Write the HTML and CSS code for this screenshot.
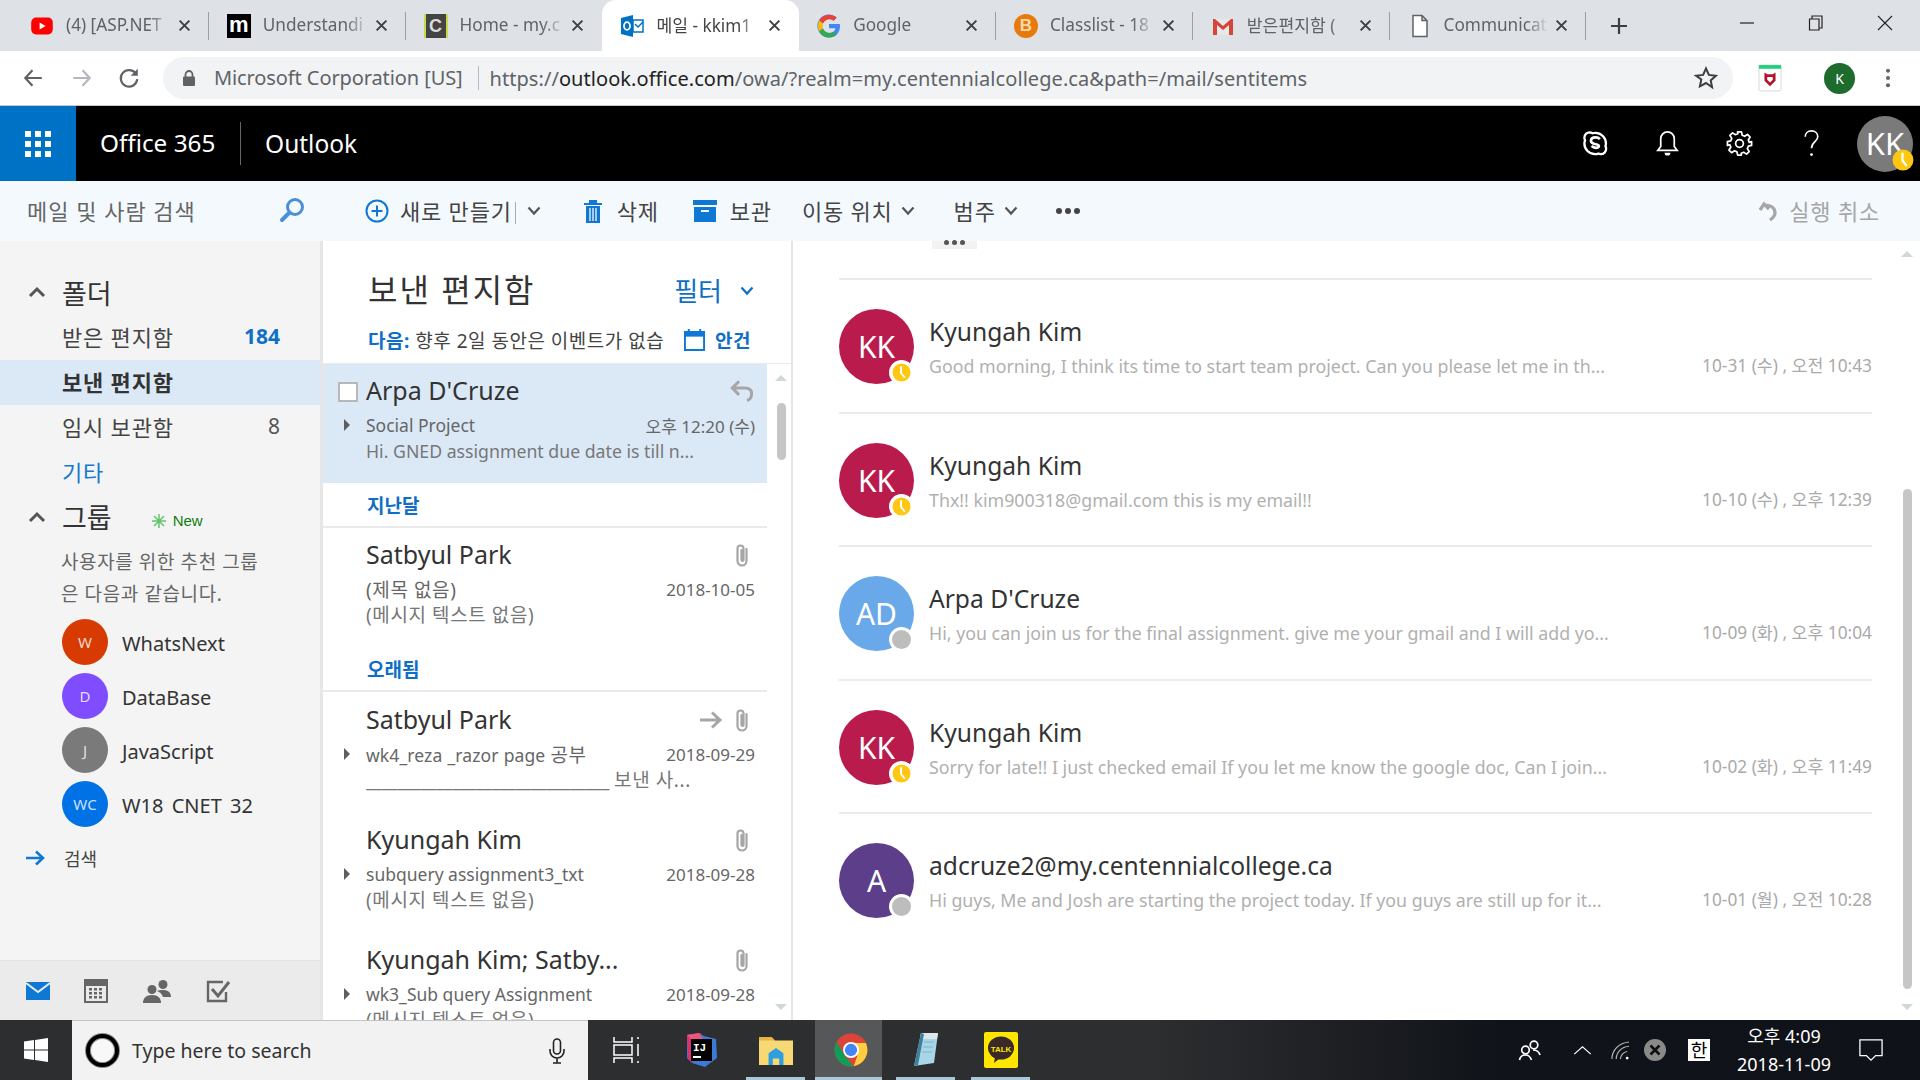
FILE: index.html
```html
<!DOCTYPE html>
<html lang="ko">
<head>
<meta charset="utf-8">
<title>메일 - Outlook</title>
<link rel="stylesheet" href="styles.css">
</head>
<body>
<svg class="sprite" width="0" height="0">
  <symbol id="x" viewBox="0 0 12 12"><path d="M1.5 1.5l9 9M10.5 1.5l-9 9" stroke="#3c4043" stroke-width="1.8" fill="none"/></symbol>
  <symbol id="chev" viewBox="0 0 14 10"><path d="M1.5 1.5L7 7.500l5.500-6" stroke="currentColor" stroke-width="2.200" fill="none"/></symbol>
  <symbol id="caret" viewBox="0 0 8 12"><path d="M1 0l6 6-6 6z" fill="#5f5f5f"/></symbol>
  <symbol id="clip" viewBox="0 0 14 24"><path d="M11.5 6v12a4.500 4.500 0 0 1-9 0V5.500a3 3 0 0 1 6 0V17a1 1 0 0 1-2 0V7" stroke="#a6a6a6" stroke-width="2.200" fill="none" stroke-linecap="round"/></symbol>
  <symbol id="clock" viewBox="0 0 20 20"><circle cx="10" cy="10" r="9.500" fill="#fdc712"/><path d="M9.500 3.500v7l4 5" stroke="#fff" stroke-width="2" fill="none"/></symbol>
</svg>

<header class="tabstrip">
  <div class="tab sep">
    <svg class="fav" viewBox="0 0 20 20"><rect x="1" y="3" width="18" height="14" rx="4" fill="#f00"/><path d="M8 7l5 3-5 3z" fill="#fff"/></svg>
    <span class="tab-title">(4) [ASP.NET</span><svg class="tab-x"><use href="#x"/></svg>
  </div>
  <div class="tab sep">
    <span class="fav fav-m">m</span>
    <span class="tab-title">Understandi</span><svg class="tab-x"><use href="#x"/></svg>
  </div>
  <div class="tab">
    <span class="fav fav-c">C</span>
    <span class="tab-title">Home - my.c</span><svg class="tab-x"><use href="#x"/></svg>
  </div>
  <div class="tab active">
    <svg class="fav" viewBox="0 0 24 24"><path d="M1 4l12-3v22L1 20z" fill="#0072c6"/><rect x="13" y="6" width="10" height="12" fill="none" stroke="#0072c6" stroke-width="1.500"/><path d="M15 10l3 3 5-5" stroke="#0072c6" stroke-width="1.500" fill="none"/><ellipse cx="7" cy="12" rx="3" ry="3.800" fill="none" stroke="#fff" stroke-width="1.800"/></svg>
    <span class="tab-title">메일 - kkim1</span><svg class="tab-x"><use href="#x"/></svg>
  </div>
  <div class="tab sep">
    <svg class="fav" viewBox="0 0 24 24"><path d="M12 10v4.200h6.500c-.6 3-3 4.800-6.500 4.800a7 7 0 1 1 4.600-12.300l3.100-3.100A11.500 11.500 0 1 0 12 23.500c6.300 0 11-4.400 11-11.500 0-.7-.1-1.400-.2-2z" fill="#4285f4"/><path d="M2.200 6.500L6 9.400A7 7 0 0 1 16.600 6.700l3.100-3.100A11.500 11.500 0 0 0 2.200 6.500z" fill="#ea4335"/><path d="M1 12a11 11 0 0 0 1.200 5.300L6 14.400a7 7 0 0 1 0-5L2.200 6.500A11 11 0 0 0 1 12z" fill="#fbbc05"/><path d="M2.200 17.400A11.500 11.500 0 0 0 12 23.500c3 0 5.600-1 7.500-2.800l-3.500-2.800A7 7 0 0 1 6 14.500z" fill="#34a853"/></svg>
    <span class="tab-title">Google</span><svg class="tab-x"><use href="#x"/></svg>
  </div>
  <div class="tab sep">
    <span class="fav fav-b">B</span>
    <span class="tab-title">Classlist - 18</span><svg class="tab-x"><use href="#x"/></svg>
  </div>
  <div class="tab sep">
    <svg class="fav" viewBox="0 0 24 24"><rect x="2" y="5" width="20" height="16" fill="#e8e8e8"/><path d="M2 5v16h4V11l6 5 6-5v10h4V5h-2l-8 7-8-7z" fill="#d44638"/></svg>
    <span class="tab-title">받은편지함 (</span><svg class="tab-x"><use href="#x"/></svg>
  </div>
  <div class="tab sep">
    <svg class="fav" viewBox="0 0 20 24"><path d="M3 1.500h9l5 5v16H3zM12 1.500v5h5" fill="#fff" stroke="#5f6368" stroke-width="1.500"/></svg>
    <span class="tab-title">Communicat</span><svg class="tab-x"><use href="#x"/></svg>
  </div>
  <svg class="tab-plus" viewBox="0 0 18 18"><path d="M9 1v16M1 9h16" stroke="#3c4043" stroke-width="2.200"/></svg>
  <div class="win-controls">
    <svg viewBox="0 0 16 16"><path d="M1 8h14" stroke="#222" stroke-width="1.200"/></svg>
    <svg viewBox="0 0 16 16"><path d="M4 4V1h10v12h-3M1.500 4h9.500v11H1.500z" stroke="#222" stroke-width="1.200" fill="none"/></svg>
    <svg viewBox="0 0 16 16"><path d="M1 1l14 14M15 1L1 15" stroke="#222" stroke-width="1.100"/></svg>
  </div>
</header>

<nav class="toolbar">
  <svg class="nav-ico" viewBox="0 0 20 20"><path d="M18 10H3M9.500 3L3 10l6.500 7" stroke="#5f6368" stroke-width="2" fill="none"/></svg>
  <svg class="nav-ico" viewBox="0 0 20 20"><path d="M2 10h15M10.500 3l6.500 7-6.500 7" stroke="#b4b7bb" stroke-width="2" fill="none"/></svg>
  <svg class="nav-ico" viewBox="0 0 20 20"><path d="M16.500 6.500A7.500 7.500 0 1 0 17.500 11" stroke="#5f6368" stroke-width="2" fill="none"/><path d="M18 1.500V8h-6.500z" fill="#5f6368"/></svg>
  <div class="omnibox">
    <svg class="lock" viewBox="0 0 14 18"><path d="M3.500 8V5.500a3.500 3.500 0 0 1 7 0V8" stroke="#5f6368" stroke-width="1.800" fill="none"/><rect x="1" y="7.500" width="12" height="9.500" rx="1" fill="#5f6368"/></svg>
    <span class="origin">Microsoft Corporation [US]</span>
    <span class="url">https://<b>outlook.office.com</b>/owa/?realm=my.centennialcollege.ca&amp;path=/mail/sentitems</span>
    <svg class="star" viewBox="0 0 24 24"><path d="M12 2.500l2.900 6.400 7 .8-5.200 4.700 1.400 6.900L12 17l-6.100 3.300 1.400-6.900L2.100 9.700l7-.8z" stroke="#3c4043" stroke-width="2" fill="none"/></svg>
  </div>
  <svg class="ext" viewBox="0 0 26 30"><rect x="1" y="1" width="24" height="28" rx="2" fill="#fff" stroke="#d5d5d5"/><rect x="1" y="1" width="24" height="4" fill="#1fd07f"/><path d="M7 9l3 2h6l3-2v9l-6 6-6-6z" fill="#b3142b"/><path d="M10 14h6v3l-3 3-3-3z" fill="#fff"/></svg>
  <span class="profile">K</span>
  <svg class="kebab" viewBox="0 0 6 24"><circle cx="3" cy="4" r="2.200" fill="#5f6368"/><circle cx="3" cy="12" r="2.200" fill="#5f6368"/><circle cx="3" cy="20" r="2.200" fill="#5f6368"/></svg>
</nav>

<section class="suitebar">
  <div class="waffle"><svg viewBox="0 0 26 26"><g fill="#fff"><rect width="6" height="6"/><rect x="10" width="6" height="6"/><rect x="20" width="6" height="6"/><rect y="10" width="6" height="6"/><rect x="10" y="10" width="6" height="6"/><rect x="20" y="10" width="6" height="6"/><rect y="20" width="6" height="6"/><rect x="10" y="20" width="6" height="6"/><rect x="20" y="20" width="6" height="6"/></g></svg></div>
  <span class="brand">Office 365</span>
  <span class="app">Outlook</span>
  <div class="suite-icons">
    <svg viewBox="0 0 30 30"><path d="M9 3.500a5.500 5.500 0 0 0-5.500 5.500c0 1 .3 2 .7 2.800-.5 1-.7 2-.7 3.200a11 11 0 0 0 11 11c1.200 0 2.300-.2 3.300-.6.800.4 1.700.6 2.700.6a5.500 5.500 0 0 0 5.500-5.500c0-1-.3-2-.7-2.800.3-.9.500-1.800.5-2.700a11 11 0 0 0-11-11c-1 0-2 .1-2.900.4A5.400 5.400 0 0 0 9 3.500z" fill="none" stroke="#fff" stroke-width="2.400"/><path d="M19.500 10.500c-1-1.200-2.500-1.800-4.500-1.800-2.800 0-4.700 1.400-4.700 3.500 0 4.700 8.200 2.700 8.200 5.500 0 1-1.200 1.800-3.300 1.800-1.800 0-3.100-.8-4.200-2" fill="none" stroke="#fff" stroke-width="2.800"/></svg>
    <svg viewBox="0 0 30 30"><path d="M15 3a7 7 0 0 0-7 7v8l-3 4h20l-3-4v-8a7 7 0 0 0-7-7z" fill="none" stroke="#fff" stroke-width="1.800"/><path d="M12 24.500a3 3 0 0 0 6 0z" fill="#fff"/></svg>
    <svg viewBox="0 0 30 30"><circle cx="15" cy="15" r="4" fill="none" stroke="#fff" stroke-width="1.800"/><path d="M13 3h4l.8 3.500 2.500 1 3-1.900 2.700 2.700-1.900 3 1 2.500L27.500 13v4l-3.400.8-1 2.500 1.900 3-2.700 2.700-3-1.900-2.500 1L16.900 27h-3.800l-.8-3.400-2.500-1-3 1.900-2.700-2.700 1.900-3-1-2.500L2.500 17v-4L6 12.200l1-2.500-1.900-3 2.700-2.700 3 1.900 2.500-1z" fill="none" stroke="#fff" stroke-width="1.800" stroke-linejoin="round"/></svg>
    <svg viewBox="0 0 30 30"><path d="M8.500 8c0-3.500 2.800-6 6.500-6s6.500 2.500 6.500 6c0 5-6.500 5.500-6.500 12" fill="none" stroke="#fff" stroke-width="1.700"/><circle cx="15" cy="26.500" r="1.500" fill="#fff"/></svg>
  </div>
  <div class="me">KK<svg class="me-badge"><use href="#clock"/></svg></div>
</section>

<main class="workspace">
  <aside class="leftnav">
    <div class="searchbox">
      <span>메일 및 사람 검색</span>
      <svg viewBox="0 0 26 26"><circle cx="16" cy="10" r="7.500" fill="none" stroke="#4a90d9" stroke-width="3"/><path d="M10.500 15.500L3 23" stroke="#4a90d9" stroke-width="4" stroke-linecap="round"/></svg>
    </div>
    <div class="folders">
      <div class="sect-head"><svg class="sect-chev" viewBox="0 0 18 12"><path d="M2 10l7-7 7 7" stroke="#555" stroke-width="3" fill="none"/></svg><span>폴더</span></div>
      <div class="folder"><span>받은 편지함</span><b class="count-blue">184</b></div>
      <div class="folder current"><span>보낸 편지함</span></div>
      <div class="folder"><span>임시 보관함</span><span class="count">8</span></div>
      <div class="folder more"><span>기타</span></div>
      <div class="sect-head group-head"><svg class="sect-chev" viewBox="0 0 18 12"><path d="M2 10l7-7 7 7" stroke="#555" stroke-width="3" fill="none"/></svg><span>그룹</span>
        <span class="new-tag"><svg viewBox="0 0 14 14"><path d="M7 0v14M0 7h14M2 2l10 10M12 2L2 12" stroke="#63c56b" stroke-width="1.500"/></svg>New</span>
      </div>
      <p class="group-note">사용자를 위한 추천 그룹<br>은 다음과 같습니다.</p>
      <div class="group"><span class="g-av g-w">W</span><span>WhatsNext</span></div>
      <div class="group"><span class="g-av g-d">D</span><span>DataBase</span></div>
      <div class="group"><span class="g-av g-j">J</span><span>JavaScript</span></div>
      <div class="group"><span class="g-av g-c">WC</span><span class="g-clip">W18 CNET 32</span></div>
      <div class="discover"><svg viewBox="0 0 20 16"><path d="M1 8h17M11 1.500L18 8l-7 6.500" stroke="#0f78d4" stroke-width="2.600" fill="none"/></svg><span>검색</span></div>
    </div>
    <div class="modules">
      <svg viewBox="0 0 24 18"><rect width="24" height="18" fill="#0f78d4"/><path d="M0 1l12 9L24 1" stroke="#ebebeb" stroke-width="2" fill="none"/></svg>
      <svg viewBox="0 0 24 24"><rect width="24" height="24" fill="#666"/><rect x="2" y="7" width="20" height="15" fill="#ebebeb"/><g fill="#666"><rect x="5" y="9" width="3" height="2.500"/><rect x="10" y="9" width="3" height="2.500"/><rect x="15" y="9" width="3" height="2.500"/><rect x="5" y="13" width="3" height="2.500"/><rect x="10" y="13" width="3" height="2.500"/><rect x="15" y="13" width="3" height="2.500"/><rect x="5" y="17" width="3" height="2.500"/><rect x="10" y="17" width="3" height="2.500"/><rect x="15" y="17" width="3" height="2.500"/></g></svg>
      <svg viewBox="0 0 30 24"><g fill="#666"><circle cx="10" cy="10.500" r="4.500"/><path d="M1 24c0-5 3-8 9-8s9 3 9 8z"/><circle cx="21" cy="5.500" r="4.500"/><path d="M15 12c1.500-1 3.500-1 6-1 5 0 8 2.500 8 7h-8c-1-3-3-5-6-6z"/></g></svg>
      <svg viewBox="0 0 24 24"><path d="M20 13v9H2V3h15" stroke="#666" stroke-width="2.400" fill="none"/><path d="M6 10l6 7L23 3" stroke="#666" stroke-width="3" fill="none"/></svg>
    </div>
  </aside>

  <div class="content">
    <div class="commands">
      <div class="cmd cmd-new"><svg viewBox="0 0 24 24"><circle cx="12" cy="12" r="10.500" fill="none" stroke="#0f78d4" stroke-width="2"/><path d="M12 6.500v11M6.500 12h11" stroke="#0f78d4" stroke-width="2"/></svg><span>새로 만들기</span><i class="pipe"></i><svg class="c-chev"><use href="#chev"/></svg></div>
      <div class="cmd cmd-del"><svg viewBox="0 0 18 24"><path d="M0 4h18v2H0zM5 1h8v3H5zM2 7h14v17H2z" fill="#0f78d4"/><path d="M6 9v13M9 9v13M12 9v13" stroke="#f4f9fd" stroke-width="1.300"/></svg><span>삭제</span></div>
      <div class="cmd cmd-arc"><svg viewBox="0 0 24 22"><path d="M0 0h24v5H0zM1 7h22v15H1z" fill="#0f78d4"/><path d="M8 11h8" stroke="#f4f9fd" stroke-width="2"/></svg><span>보관</span></div>
      <div class="cmd cmd-move"><span>이동 위치</span><svg class="c-chev"><use href="#chev"/></svg></div>
      <div class="cmd cmd-cat"><span>범주</span><svg class="c-chev"><use href="#chev"/></svg></div>
      <div class="cmd-dots"><i></i><i></i><i></i></div>
      <div class="cmd cmd-undo"><svg viewBox="0 0 22 22"><path d="M3 10l4-6 5 5M7 5c7 0 11 3 11 8 0 3-2 5-5 7" stroke="#a6a6a6" stroke-width="3.200" fill="none"/></svg><span>실행 취소</span></div>
    </div>
    <div class="panes">
      <section class="listpane">
        <div class="list-title"><h1>보낸 편지함</h1><span class="filter">필터<svg><use href="#chev"/></svg></span></div>
        <div class="list-next">
          <span><b>다음:</b> 향후 2일 동안은 이벤트가 없습</span>
          <span class="agenda"><svg viewBox="0 0 22 24"><path d="M1 4h20v19H1z" fill="none" stroke="#0f78d4" stroke-width="2"/><path d="M1 4h20v5H1z" fill="#0f78d4"/><path d="M5 1v5M17 1v5" stroke="#0f78d4" stroke-width="2"/></svg><b>안건</b></span>
        </div>
        <div class="list-body">
          <div class="list-scroll">
            <article class="mail selected">
              <span class="checkbox"></span>
              <div class="m-top"><span class="m-name">Arpa D'Cruze</span><svg class="m-reply" viewBox="0 0 22 22"><path d="M8 2L2 8l6 6M2 8h11c4 0 6 2 6 5 0 2-1 5-4 6" stroke="#a6a6a6" stroke-width="2.600" fill="none"/></svg></div>
              <div class="m-sub"><svg class="m-caret"><use href="#caret"/></svg><span>Social Project</span><time>오후 12:20 (수)</time></div>
              <div class="m-body">Hi. GNED assignment due date is till n...</div>
            </article>
            <h2 class="m-group">지난달</h2>
            <article class="mail mail-short">
              <div class="m-top"><span class="m-name">Satbyul Park</span><svg class="m-clip"><use href="#clip"/></svg></div>
              <div class="m-sub"><span class="ko">(제목 없음)</span><time>2018-10-05</time></div>
              <div class="m-body ko">(메시지 텍스트 없음)</div>
            </article>
            <h2 class="m-group">오래됨</h2>
            <article class="mail">
              <div class="m-top"><span class="m-name">Satbyul Park</span><svg class="m-fwd" viewBox="0 0 24 20"><path d="M1 10h20M13 2.500l8 7.500-8 7.500" stroke="#a6a6a6" stroke-width="3" fill="none"/></svg><svg class="m-clip"><use href="#clip"/></svg></div>
              <div class="m-sub"><svg class="m-caret"><use href="#caret"/></svg><span class="wide">wk4_reza _razor page <span class="ko">공부</span></span><time>2018-09-29</time></div>
              <div class="m-body">_______________________________ <span class="ko">보낸 사...</span></div>
            </article>
            <article class="mail">
              <div class="m-top"><span class="m-name">Kyungah Kim</span><svg class="m-clip"><use href="#clip"/></svg></div>
              <div class="m-sub"><svg class="m-caret"><use href="#caret"/></svg><span>subquery assignment3_txt</span><time>2018-09-28</time></div>
              <div class="m-body ko">(메시지 텍스트 없음)</div>
            </article>
            <article class="mail">
              <div class="m-top"><span class="m-name">Kyungah Kim; Satby...</span><svg class="m-clip"><use href="#clip"/></svg></div>
              <div class="m-sub"><svg class="m-caret"><use href="#caret"/></svg><span>wk3_Sub query Assignment</span><time>2018-09-28</time></div>
              <div class="m-body ko">(메시지 텍스트 없음)</div>
            </article>
          </div>
          <div class="scrollbar sb-list"><i class="sb-up"></i><i class="sb-thumb"></i><i class="sb-down"></i></div>
        </div>
      </section>

      <section class="reading">
        <span class="expander"><i></i><i></i><i></i></span>
        <div class="thread">
          <article class="conv"><div class="av av-kk">KK<svg class="av-badge"><use href="#clock"/></svg></div><div class="conv-main"><div class="conv-name">Kyungah Kim</div><div class="conv-line"><span>Good morning, I think its time to start team project. Can you please let me in th...</span><time>10-31 (수) , 오전 10:43</time></div></div></article>
          <article class="conv"><div class="av av-kk">KK<svg class="av-badge"><use href="#clock"/></svg></div><div class="conv-main"><div class="conv-name">Kyungah Kim</div><div class="conv-line"><span>Thx!! kim900318@gmail.com this is my email!!</span><time>10-10 (수) , 오후 12:39</time></div></div></article>
          <article class="conv"><div class="av av-ad">AD<i class="av-off"></i></div><div class="conv-main"><div class="conv-name">Arpa D'Cruze</div><div class="conv-line"><span>Hi, you can join us for the final assignment. give me your gmail and I will add yo...</span><time>10-09 (화) , 오후 10:04</time></div></div></article>
          <article class="conv"><div class="av av-kk">KK<svg class="av-badge"><use href="#clock"/></svg></div><div class="conv-main"><div class="conv-name">Kyungah Kim</div><div class="conv-line"><span>Sorry for late!! I just checked email If you let me know the google doc, Can I join...</span><time>10-02 (화) , 오후 11:49</time></div></div></article>
          <article class="conv"><div class="av av-a">A<i class="av-off"></i></div><div class="conv-main"><div class="conv-name">adcruze2@my.centennialcollege.ca</div><div class="conv-line"><span>Hi guys, Me and Josh are starting the project today. If you guys are still up for it...</span><time>10-01 (월) , 오전 10:28</time></div></div></article>
        </div>
        <div class="scrollbar sb-read"><i class="sb-up"></i><i class="sb-thumb"></i><i class="sb-down"></i></div>
      </section>
    </div>
  </div>
</main>

<footer class="taskbar">
  <div class="start"><svg viewBox="0 0 24 24"><path d="M0 3.500l10-1.400V11.500H0zM11 2l13-2v11.500H11zM0 12.500h10v9.500L0 20.500zM11 12.500h13V24l-13-2z" fill="#fff"/></svg></div>
  <div class="tb-search">
    <span class="cortana"></span>
    <span class="tb-text">Type here to search</span>
    <svg viewBox="0 0 16 26"><rect x="4.500" y="1" width="7" height="15" rx="3.500" fill="none" stroke="#222" stroke-width="1.600"/><path d="M1 11v2a7 7 0 0 0 14 0v-2M8 20v5M4 25h8" stroke="#222" stroke-width="1.600" fill="none"/></svg>
  </div>
  <div class="tb-apps">
    <div class="tb-app tb-view"><svg viewBox="0 0 28 28"><path d="M2 1v5h18V1M2 27v-5h18v5M2 9h18v10H2zM26 1v2M26 8v12M26 25v2" stroke="#fff" stroke-width="1.500" fill="none"/></svg></div>
    <div class="tb-app"><svg viewBox="0 0 34 36"><path d="M3 3l12-2 5 3 12 3 1 19-12 9-13-4-5-5z" fill="#3a7bd5"/><path d="M3 3l14-2-8 30-5-4z" fill="#d6336c"/><path d="M3 3l12-2 4 6-8 4z" fill="#f0537b"/><rect x="7" y="7" width="21" height="22" fill="#000"/><text x="9" y="19" class="ij">IJ</text><rect x="9" y="24" width="8" height="2" fill="#fff"/></svg></div>
    <div class="tb-app run"><svg viewBox="0 0 32 28"><path d="M0 2h12l3 3h17v23H0z" fill="#f8d775"/><path d="M0 2h12l3 3H0z" fill="#e8b33f"/><path d="M9 28V17l7-5 7 5v11h-4v-6h-6v6z" fill="#2d9fe0"/></svg></div>
    <div class="tb-app tb-chrome run"><svg viewBox="0 0 32 32"><circle cx="16" cy="16" r="15.500" fill="#db4437"/><path d="M16 31.500A15.500 15.500 0 0 1 2.600 8.300l8 13.800 7.800 9.200z" fill="#0f9d58"/><path d="M18.500 31.300A15.500 15.500 0 0 0 30 9.500H16l6 12z" fill="#ffcd40"/><circle cx="16" cy="16" r="7.500" fill="#fff"/><circle cx="16" cy="16" r="5.800" fill="#4285f4"/></svg></div>
    <div class="tb-app run"><svg viewBox="0 0 28 36"><path d="M9 1h17l-4 30-20 3z" fill="#a8d6e8"/><path d="M9 1h17l-1 6H8z" fill="#dfe6ea"/><path d="M2 34l7-33 3 1-6 31z" fill="#3f7f9a"/><path d="M12 10l10 0M11 15h10M10 20h10" stroke="#7fb4c8"/></svg></div>
    <div class="tb-app run"><svg viewBox="0 0 34 36"><rect width="34" height="36" rx="2" fill="#ffe600"/><ellipse cx="17" cy="16" rx="13" ry="11.500" fill="#3a2929"/><path d="M11 25l-1 6 6-5z" fill="#3a2929"/><text x="17" y="19.500" class="talk">TALK</text></svg></div>
  </div>
  <div class="tray">
    <svg class="tr-people" viewBox="0 0 24 24"><g fill="none" stroke="#fff" stroke-width="1.700"><circle cx="16" cy="7" r="3.800"/><circle cx="7.500" cy="12" r="3.800"/><path d="M1.500 22c.5-3 2.500-5 6-5s5 2 6 5M15 12c3 0 6 1.500 7 5"/></g></svg>
    <svg class="tr-up" viewBox="0 0 20 12"><path d="M1 10l9-8 9 8" stroke="#fff" stroke-width="1.300" fill="none"/></svg>
    <svg class="tr-wifi" viewBox="0 0 20 20"><path d="M1 19C1 10 8 2 19 1M5.500 19C5.500 12 11 6 19 5.500M10 19c0-4 3-7.500 7-8" stroke="#bbb" stroke-width="1.200" fill="none"/><circle cx="17" cy="18" r="1.500" fill="#fff"/></svg>
    <svg class="tr-off" viewBox="0 0 22 22"><circle cx="11" cy="11" r="11" fill="#8a8a8a"/><path d="M6.500 6.500l9 9M15.500 6.500l-9 9" stroke="#111" stroke-width="2.600"/></svg>
    <span class="ime">한</span>
    <div class="clock"><span>오후 4:09</span><span>2018-11-09</span></div>
    <svg class="tr-note" viewBox="0 0 26 26"><path d="M1 2h24v17h-7l-5 5-5-5H1z" stroke="#fff" stroke-width="1.400" fill="none"/></svg>
  </div>
</footer>
</body>
</html>
```

FILE: styles.css
```css
* { box-sizing: border-box; }
html, body { margin: 0; padding: 0; height: 1080px; width: 1920px; overflow: hidden; }
body { font-family: "Noto Sans", "Noto Sans CJK KR", sans-serif; color: #333; background: #fff; display: flex; flex-direction: column; }
.sprite { position: absolute; }
svg { display: block; flex: none; }

/* tab strip */
.tabstrip { height: 51px; background: #dee1e6; display: flex; align-items: center; padding-left: 12px; flex: none; }
.tab { width: 196.800px; height: 51px; display: flex; align-items: center; padding: 0 18px; font-size: 17.200px; color: #5f6368; }
.tab.sep { background: linear-gradient(#9aa0a6,#9aa0a6) right center / 1px 28px no-repeat; }
.tab.active { background: #fff; border-radius: 14px 14px 0 0; color: #444; }
.fav { width: 24px; height: 24px; margin-right: 12px; flex: none; }
.fav-m { background: #000; color: #fff; font: 700 22px/22px "Liberation Sans", sans-serif; text-align: center; }
.fav-c { background: #444; color: #ddd; font: 700 18px/24px "Liberation Sans", sans-serif; text-align: center; border-left: 2px solid #c8d94a; border-right: 2px solid #c8d94a; }
.fav-b { background: #e8790c; color: #ffd9a8; font: 700 17px/24px "Liberation Sans", sans-serif; text-align: center; border-radius: 50%; }
.tab-title { flex: 1; min-width: 0; white-space: nowrap; overflow: hidden; padding-bottom: 3px; -webkit-mask-image: linear-gradient(to right, #000 78%, transparent 100%); mask-image: linear-gradient(to right, #000 78%, transparent 100%); }
.tab-x { width: 13px; height: 13px; margin-left: 6px; flex: none; }
.tab-plus { width: 18px; height: 18px; margin-left: 24px; }
.win-controls { margin-left: auto; display: flex; gap: 53px; padding-right: 27px; align-items: center; }
.win-controls svg { width: 16px; height: 16px; margin-bottom: 6px; }

/* toolbar */
.toolbar { height: 55px; flex: none; background: #fff; display: flex; align-items: center; padding: 0 20px 0 22px; border-bottom: 1px solid #c8c8c8; }
.nav-ico { width: 22px; height: 22px; margin-right: 27px; }
.nav-ico:nth-child(2) { margin-right: 25px; }
.nav-ico:nth-child(3) { margin-right: 29px; }
.omnibox { width: 1570px; height: 42px; margin-left: -6px; background: #f1f3f4; border-radius: 21px; display: flex; align-items: center; padding: 0 15px 0 19px; font-size: 20px; color: #5f6368; }
.lock { width: 14px; height: 18px; margin-right: 18px; }
.origin { padding-right: 15px; border-right: 1px solid #bbb; line-height: 24px; letter-spacing: -.1px; }
.url { margin-left: 11px; letter-spacing: .06px; white-space: nowrap; }
.url b { font-weight: 400; color: #222; }
.star { width: 24px; height: 24px; margin-left: auto; }
.ext { width: 24px; height: 28px; margin-left: 25px; }
.profile { width: 31px; height: 31px; border-radius: 50%; background: #1e6b2e; color: #fff; font-size: 14px; line-height: 31px; text-align: center; margin-left: 42px; }
.kebab { width: 6px; height: 22px; margin-left: 30px; }

/* suite bar */
.suitebar { height: 75px; flex: none; background: #000; color: #fff; display: flex; align-items: center; }
.waffle { width: 76px; height: 75px; background: #0072c6; display: flex; align-items: center; justify-content: center; }
.waffle svg { width: 26px; height: 26px; }
.brand { font-size: 24.300px; width: 165px; padding-left: 24px; border-right: 1px solid #666; line-height: 42px; padding-bottom: 1px; }
.app { font-size: 24.500px; padding-left: 24px; padding-bottom: 1px; }
.suite-icons { margin-left: auto; display: flex; gap: 43px; align-items: center; }
.suite-icons svg { width: 29px; height: 29px; }
.me { width: 56px; height: 56px; border-radius: 50%; background: #7a7a7a; position: relative; font-size: 31px; line-height: 54px; text-align: center; margin: 0 7px 0 31px; color: #fff; white-space: nowrap; }
.me-badge { position: absolute; right: -1px; bottom: 1px; width: 22px; height: 22px; }

/* workspace */
.workspace { flex: 1; min-height: 0; display: flex; }
.leftnav { width: 323px; flex: none; display: flex; flex-direction: column; background: #f4f4f4; border-right: 3px solid #e6e6e6; }
.searchbox { height: 60px; flex: none; background: #f4f9fd; display: flex; align-items: center; justify-content: space-between; padding: 0 18px 2px 27px; font-size: 22px; color: #666; letter-spacing: 1px; margin-right: -3px; }
.searchbox svg { width: 26px; height: 26px; }
.folders { flex: 1; min-height: 0; padding-top: 28px; }
.sect-head { height: 46px; display: flex; align-items: center; padding-left: 28px; font-size: 27px; color: #333; }
.sect-chev { width: 18px; height: 12px; margin-right: 16px; }
.folder { height: 45px; display: flex; align-items: center; justify-content: space-between; padding: 0 40px 3px 62px; font-size: 22px; color: #444; letter-spacing: .8px; }
.folder.current { background: #dbe9f7; font-weight: 700; color: #333; }
.count-blue { color: #0f6fc6; font-size: 21px; letter-spacing: 0; }
.count { color: #555; letter-spacing: 0; font-size: 21px; }
.folder.more { color: #1479d0; }
.group-head { height: 43px; }
.new-tag { display: flex; align-items: center; gap: 7px; margin-left: 40px; margin-top: 8px; font: 15px "Liberation Sans", sans-serif; color: #107c10; }
.new-tag svg { width: 14px; height: 14px; }
.group-note { margin: 8px 0 5px; padding-left: 61px; font-size: 19px; line-height: 32px; color: #666; letter-spacing: .6px; }
.group { height: 54px; display: flex; align-items: center; padding-left: 62px; font-size: 20px; color: #333; }
.group > span:last-child { padding-top: 2px; margin-left: -1px; }
.g-av { width: 46px; height: 46px; border-radius: 50%; color: rgba(255,255,255,.8); font-size: 15px; display: flex; align-items: center; justify-content: center; margin-right: 15px; flex: none; }
.g-w { background: #d83b01; }
.g-d { background: #7f4cff; }
.g-j { background: #7a7a7a; }
.g-c { background: #0072e6; }
.g-clip { white-space: nowrap; word-spacing: 3px; }
.discover { display: flex; align-items: center; padding-left: 25px; height: 54px; font-size: 18px; color: #444; }
.discover svg { width: 20px; height: 16px; margin-right: 19px; }
.modules { height: 60px; flex: none; background: #ebebeb; border-top: 1px solid #e2e2e2; display: flex; align-items: center; padding-left: 26px; gap: 34px; }
.modules svg { width: 24px; height: 24px; }
.modules svg:nth-child(3) { width: 30px; }

/* content */
.content { flex: 1; min-width: 0; display: flex; flex-direction: column; }
.commands { height: 60px; flex: none; background: #f4f9fd; display: flex; align-items: center; font-size: 22px; color: #444; letter-spacing: .8px; padding-right: 40px; }
.cmd { display: flex; align-items: center; flex: none; }
.cmd span { margin-bottom: 2px; }
.cmd-new { margin-left: 42px; }
.cmd-new > svg:first-child { width: 24px; height: 24px; margin-right: 11px; }
.pipe { width: 1px; height: 22px; background: #aaa; margin: 4px 11px 0 3px; }
.c-chev { width: 14px; height: 10px; color: #555; margin-left: 8px; }
.cmd-new .c-chev { margin-left: 0; }
.cmd-del { margin-left: 43px; }
.cmd-del svg { width: 18px; height: 24px; margin-right: 15px; }
.cmd-arc { margin-left: 34px; }
.cmd-arc svg { width: 24px; height: 22px; margin-right: 13px; }
.cmd-move { margin-left: 30px; }
.cmd-cat { margin-left: 39px; }
.cmd-dots { display: flex; gap: 3px; margin-left: 38px; }
.cmd-dots i { width: 6px; height: 6px; border-radius: 50%; background: #444; }
.cmd-undo { margin-left: auto; color: #a6a6a6; }
.cmd-undo svg { width: 22px; height: 22px; margin-right: 10px; }

.panes { flex: 1; min-height: 0; display: flex; }
.listpane { width: 470px; flex: none; border-right: 2px solid #e6e6e6; display: flex; flex-direction: column; }
.list-title { height: 77px; flex: none; display: flex; align-items: center; justify-content: space-between; padding: 16px 37px 0 45px; }
.list-title h1 { margin: 0; font-size: 32px; font-weight: 400; color: #333; letter-spacing: 2px; }
.filter { display: flex; align-items: center; font-size: 26px; color: #0f6fc6; margin-top: 4px; }
.filter svg { width: 14px; height: 10px; margin-left: 18px; margin-top: 3px; }
.list-next { height: 46px; flex: none; display: flex; align-items: center; justify-content: space-between; padding: 0 40px 2px 45px; font-size: 19px; letter-spacing: .5px; color: #444; border-bottom: 1px solid #eaeaea; white-space: nowrap; }
.list-next b { color: #0f6fc6; font-weight: 700; }
.agenda { display: flex; align-items: center; gap: 10px; }
.agenda svg { width: 21px; height: 23px; }
.list-body { flex: 1; min-height: 0; display: flex; }
.list-scroll { width: 444px; flex: none; overflow: hidden; }
.mail { height: 120px; padding: 6px 12px 0 43px; position: relative; }
.mail-short { height: 119px; padding-top: 5px; }
.mail.selected { height: 119px; padding-top: 5px; background: #dbe9f7; }
.checkbox { position: absolute; left: 15px; top: 18px; width: 20px; height: 20px; background: #fff; border: 2px solid #b8b8b8; }
.m-top { height: 42px; display: flex; align-items: center; }
.m-name { font-size: 25px; color: #333; flex: 1; white-space: nowrap; }
.m-clip { width: 14px; height: 24px; margin: 2px 6px 0 0; }
.m-fwd { width: 24px; height: 20px; margin: 2px 12px 0 0; }
.m-reply { width: 25px; height: 25px; margin-top: 3px; }
.m-sub { height: 28px; display: flex; align-items: center; justify-content: space-between; font-size: 17.500px; color: #666; position: relative; white-space: nowrap; }
.m-sub time { font-size: 17px; letter-spacing: 0; }
.m-caret { position: absolute; left: -23px; top: 8px; width: 8px; height: 12px; }
.m-body { font-size: 17.700px; line-height: 26px; color: #777; white-space: nowrap; margin-top: -1px; }
.ko { font-size: 19px; letter-spacing: .6px; }
.wide { word-spacing: .5px; letter-spacing: .1px; }
.m-group { height: 45px; margin: 0; padding: 9px 0 0 44px; font-size: 19px; line-height: 28px; font-weight: 700; color: #0f6fc6; border-bottom: 2px solid #eaeaea; }
.scrollbar { display: flex; flex-direction: column; align-items: center; position: relative; }
.sb-list { flex: 1; padding-top: 11px; }
.sb-up { width: 0; height: 0; border: 6px solid transparent; border-top: 0; border-bottom: 6px solid #d0d8d8; }
.sb-down { width: 0; height: 0; border: 6px solid transparent; border-bottom: 0; border-top: 6px solid #d0d8d8; margin-top: auto; margin-bottom: 10px; }
.sb-thumb { width: 9px; border-radius: 5px; background: #c6c6c6; }
.sb-list .sb-thumb { height: 57px; margin-top: 22px; margin-left: 4px; }
.sb-list .sb-up, .sb-list .sb-down { margin-left: 4px; }

.reading { flex: 1; min-width: 0; display: flex; padding: 37px 0 0 46px; position: relative; }
.expander { position: absolute; left: 139px; top: 0; width: 45px; height: 8px; background: #f2f2f2; display: flex; justify-content: center; gap: 3px; }
.expander i { width: 5px; height: 5px; border-radius: 50%; background: #555; margin-top: -1px; }
.thread { width: 1033px; flex: none; }
.conv { height: 133.500px; display: flex; padding-top: 29px; border-top: 2px solid #ebebeb; }
.av { width: 75px; height: 75px; border-radius: 50%; color: #fff; font-size: 30px; display: flex; align-items: center; justify-content: center; position: relative; flex: none; }
.av-kk { background: #b91c4c; }
.av-ad { background: #6aa9e9; }
.av-a { background: #5c3e8a; }
.av-badge { position: absolute; right: 0; bottom: -1px; width: 25px; height: 25px; background: #fff; border-radius: 50%; padding: 3px; }
.av-off { position: absolute; right: 0; bottom: -1px; width: 25px; height: 25px; background: #bdbdbd; border: 3px solid #fff; border-radius: 50%; }
.conv-main { flex: 1; min-width: 0; padding-left: 15px; }
.conv-name { font-size: 24.600px; line-height: 36px; color: #333; margin-top: 5px; }
.conv-line { display: flex; justify-content: space-between; font-size: 17.800px; line-height: 32px; color: #b0b0b0; margin-top: 0; white-space: nowrap; }
.conv-line time { font-size: 17.300px; color: #aaa; }
.sb-read { position: absolute; right: 0; top: 0; bottom: 0; width: 26px; padding-top: 10px; }
.sb-read .sb-thumb { height: 500px; margin-top: 232px; }

/* taskbar */
.taskbar { height: 60px; flex: none; display: flex; background: linear-gradient(to right, #2d2e30 0, #2d2e30 60%, #101319 78%, #0f1218 100%); color: #fff; }
.start { width: 72px; display: flex; align-items: center; justify-content: center; }
.start svg { width: 24px; height: 24px; }
.tb-search { width: 516px; background: #f2f2f2; border-top: 1px solid #c4c4c4; display: flex; align-items: center; padding: 0 23px 0 14px; color: #333; font-size: 19.500px; }
.tb-search svg { width: 16px; height: 26px; margin-left: auto; }
.cortana { width: 33px; height: 33px; border-radius: 50%; border: 4px solid #000; box-shadow: 0 0 0 1px #888, inset 0 0 0 1px #888; background: #f8f8f8; margin-right: 13px; }
.tb-apps { display: flex; align-items: center; }
.tb-app { width: 75px; height: 60px; display: flex; align-items: center; justify-content: center; position: relative; }
.tb-app svg { width: 34px; height: 36px; }
.tb-view svg { width: 28px; height: 28px; }
.tb-chrome { background: linear-gradient(#565759,#565759) 2px 0 / 67px 60px no-repeat; }
.tb-app.run::after { content: ""; position: absolute; left: 8px; right: 8px; bottom: 0; height: 3px; background: #a9c8d8; }
.tb-chrome.run::after { left: 2px; right: 6px; }
.ij { font: 700 11px "Liberation Mono", monospace; fill: #fff; }
.talk { font: 700 8px "Liberation Sans", sans-serif; fill: #ffe600; text-anchor: middle; }
.tray { margin-left: auto; display: flex; align-items: center; font-size: 18px; padding-right: 37px; }
.tr-people { width: 24px; height: 24px; }
.tr-up { width: 19px; height: 11px; margin-left: 31px; }
.tr-wifi { width: 19px; height: 19px; margin-left: 19px; }
.tr-off { width: 22px; height: 22px; margin-left: 14px; }
.ime { width: 22px; height: 22px; background: #fff; color: #000; font-size: 18px; line-height: 22px; text-align: center; margin-left: 22px; }
.clock { width: 120px; margin-left: 14px; display: flex; flex-direction: column; align-items: center; line-height: 28px; }
.tr-note { width: 24px; height: 24px; margin-left: 15px; }
```
